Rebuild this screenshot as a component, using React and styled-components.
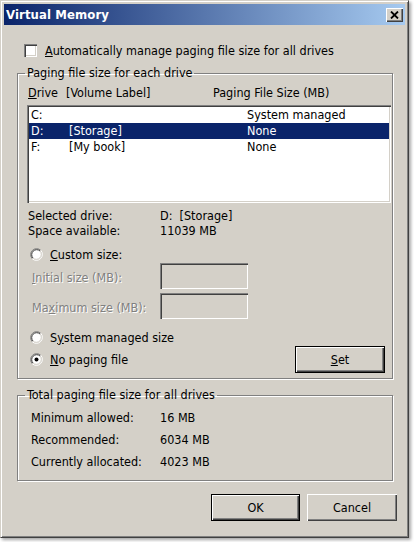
import React from "react";
import styled, { createGlobalStyle } from "styled-components";

const GlobalStyle = createGlobalStyle`
  html, body { margin: 0; padding: 0; background: #fff; }
  body {
    width: 414px; height: 542px; overflow: hidden;
    font-family: "DejaVu Sans Condensed", "Liberation Sans", sans-serif;
    font-size: 12.5px; color: #000;
  }
  * { box-sizing: border-box; }
`;

const Window = styled.div`
  width: 409px;
  height: 538px;
  background: #d4d0c8;
  border: 1px solid;
  border-color: #d4d0c8 #404040 #404040 #d4d0c8;
  box-shadow: inset 1px 1px 0 #fff, inset -1px -1px 0 #808080, 2px 2px 3px rgba(0,0,0,0.35);
  padding: 3px;
  display: flex;
  flex-direction: column;
`;

const TitleBar = styled.div`
  height: 21px;
  flex: none;
  display: flex;
  align-items: center;
  justify-content: space-between;
  padding: 0 2px 0 2px;
  background: linear-gradient(to right, #0a246a, #a6caf0);
`;

const Title = styled.span`
  color: #fff;
  font-weight: bold;
  font-size: 13px;
  letter-spacing: 0.1px;
`;

const CloseButton = styled.div`
  width: 17px;
  height: 14px;
  background: #d4d0c8;
  box-shadow: inset 1px 1px 0 #fff, inset -1px -1px 0 #404040, inset -2px -2px 0 #808080;
  display: flex;
  align-items: center;
  justify-content: center;
`;

const Client = styled.div`
  flex: 1;
  display: flex;
  flex-direction: column;
  padding: 0 8px 0 13px;
`;

const CheckRow = styled.label`
  margin-top: 17px;
  height: 16px;
  display: flex;
  align-items: center;
  gap: 8px;
  padding-left: 7px;
`;

const CheckBox = styled.span`
  width: 13px;
  height: 13px;
  background: #fff;
  box-shadow: inset 1px 1px 0 #808080, inset 2px 2px 0 #404040, inset -1px -1px 0 #fff, inset -2px -2px 0 #d4d0c8;
`;

const Key = styled.u`
  text-decoration: underline;
  text-underline-offset: 1px;
`;

const Group = styled.fieldset`
  margin: ${p => p.$top}px 4px 0 0;
  padding: 0;
  min-width: 0;
  border: 1px solid #808080;
  box-shadow: inset 1px 1px 0 #fff, 1px 1px 0 #fff;
`;

const Legend = styled.legend`
  margin-left: 7px;
  padding: 0 2px;
  line-height: 14px;
`;

const GroupBody = styled.div`
  display: flex;
  flex-direction: column;
  padding: ${p => p.$pad};
`;

const Header = styled.div`
  display: grid;
  grid-template-columns: 38px 147px 1fr;
  height: 14px;
  line-height: 14px;
  padding-left: 1px;
`;

const ListBox = styled.div`
  margin-top: 5px;
  height: 98px;
  background: #fff;
  padding: 2px;
  box-shadow: inset 1px 1px 0 #808080, inset 2px 2px 0 #404040, inset -1px -1px 0 #fff, inset -2px -2px 0 #d4d0c8;
`;

const ListRow = styled.div`
  display: grid;
  grid-template-columns: 38px 178px 1fr;
  height: 16px;
  line-height: 16px;
  padding-left: 2px;
  background: ${p => (p.$selected ? "#0a246a" : "transparent")};
  color: ${p => (p.$selected ? "#fff" : "#000")};
`;

const InfoRows = styled.div`
  margin-top: 5px;
  display: grid;
  grid-template-columns: 132px 1fr;
  grid-auto-rows: 15px;
  line-height: 15px;
  padding-left: 1px;
`;

const RadioRow = styled.label`
  display: flex;
  align-items: center;
  gap: 7px;
  height: 16px;
  padding-left: 3px;
  margin-top: ${p => p.$top || 0}px;
`;

const SizeRow = styled.div`
  display: flex;
  align-items: center;
  height: 26px;
  padding-left: 5px;
  margin-top: ${p => p.$top || 0}px;
`;

const DisabledLabel = styled.span`
  width: 128px;
  color: #808080;
  text-shadow: 1px 1px 0 #fff;
  padding-top: 2px;
`;

const TextBox = styled.div`
  width: 88px;
  height: 26px;
  background: #d4d0c8;
  box-shadow: inset 1px 1px 0 #808080, inset 2px 2px 0 #404040, inset -1px -1px 0 #fff, inset -2px -2px 0 #d4d0c8;
`;

const BottomRow = styled.div`
  display: flex;
  align-items: center;
  justify-content: space-between;
  height: 27px;
  margin-top: 1px;
  padding-right: 6px;
`;

const Button = styled.div`
  width: ${p => p.$w}px;
  height: 27px;
  display: flex;
  align-items: center;
  justify-content: center;
  background: #d4d0c8;
  border: ${p => (p.$default ? "1px solid #000" : "none")};
  box-shadow: inset 1px 1px 0 #fff, inset -1px -1px 0 #404040, inset -2px -2px 0 #808080;
`;

const TotalRows = styled.div`
  display: grid;
  grid-template-columns: 129px 1fr;
  grid-auto-rows: 22px;
  line-height: 22px;
  padding-left: 13px;
`;

const ButtonBar = styled.div`
  margin-top: 13px;
  display: flex;
  justify-content: flex-end;
  gap: 7px;
`;

function Radio({ checked }) {
  return (
    <svg width="13" height="13" viewBox="0 0 13 13">
      <circle cx="6.5" cy="6.5" r="5" fill="#fff" />
      <path d="M2.26 10.74 A6 6 0 0 1 10.74 2.26" fill="none" stroke="#808080" strokeWidth="1" />
      <path d="M10.74 2.26 A6 6 0 0 1 2.26 10.74" fill="none" stroke="#fff" strokeWidth="1" />
      <path d="M2.97 10.03 A5 5 0 0 1 10.03 2.97" fill="none" stroke="#404040" strokeWidth="1" />
      <path d="M10.03 2.97 A5 5 0 0 1 2.97 10.03" fill="none" stroke="#d4d0c8" strokeWidth="1" />
      {checked && <circle cx="6.5" cy="6.5" r="2" fill="#000" />}
    </svg>
  );
}

export default function App() {
  return (
    <>
      <GlobalStyle />
      <Window>
        <TitleBar>
          <Title>Virtual Memory</Title>
          <CloseButton>
            <svg width="9" height="8" viewBox="0 0 9 8">
              <path d="M1 0.5 L8 7.5 M8 0.5 L1 7.5" stroke="#000" strokeWidth="1.8" />
            </svg>
          </CloseButton>
        </TitleBar>
        <Client>
          <CheckRow>
            <CheckBox />
            <span><Key>A</Key>utomatically manage paging file size for all drives</span>
          </CheckRow>

          <Group $top={8}>
            <Legend>Paging file size for each drive</Legend>
            <GroupBody $pad="6px 1px 5px 9px">
              <Header>
                <span><Key>D</Key>rive</span>
                <span>[Volume Label]</span>
                <span>Paging File Size (MB)</span>
              </Header>
              <ListBox>
                <ListRow>
                  <span>C:</span>
                  <span></span>
                  <span>System managed</span>
                </ListRow>
                <ListRow $selected>
                  <span>D:</span>
                  <span>[Storage]</span>
                  <span>None</span>
                </ListRow>
                <ListRow>
                  <span>F:</span>
                  <span>[My book]</span>
                  <span>None</span>
                </ListRow>
              </ListBox>
              <InfoRows>
                <span>Selected drive:</span>
                <span>D:&nbsp;&nbsp;[Storage]</span>
                <span>Space available:</span>
                <span>11039 MB</span>
              </InfoRows>
              <RadioRow $top={8}>
                <Radio />
                <span><Key>C</Key>ustom size:</span>
              </RadioRow>
              <SizeRow $top={1}>
                <DisabledLabel><Key>I</Key>nitial size (MB):</DisabledLabel>
                <TextBox />
              </SizeRow>
              <SizeRow $top={4}>
                <DisabledLabel>Ma<Key>x</Key>imum size (MB):</DisabledLabel>
                <TextBox />
              </SizeRow>
              <RadioRow $top={10}>
                <Radio />
                <span>S<Key>y</Key>stem managed size</span>
              </RadioRow>
              <BottomRow>
                <RadioRow>
                  <Radio checked />
                  <span><Key>N</Key>o paging file</span>
                </RadioRow>
                <Button $w={90} $default><span><Key>S</Key>et</span></Button>
              </BottomRow>
            </GroupBody>
          </Group>

          <Group $top={9}>
            <Legend>Total paging file size for all drives</Legend>
            <GroupBody $pad="5px 0 7px 0">
              <TotalRows>
                <span>Minimum allowed:</span>
                <span>16 MB</span>
                <span>Recommended:</span>
                <span>6034 MB</span>
                <span>Currently allocated:</span>
                <span>4023 MB</span>
              </TotalRows>
            </GroupBody>
          </Group>

          <ButtonBar>
            <Button $w={89} $default>OK</Button>
            <Button $w={90}>Cancel</Button>
          </ButtonBar>
        </Client>
      </Window>
    </>
  );
}
